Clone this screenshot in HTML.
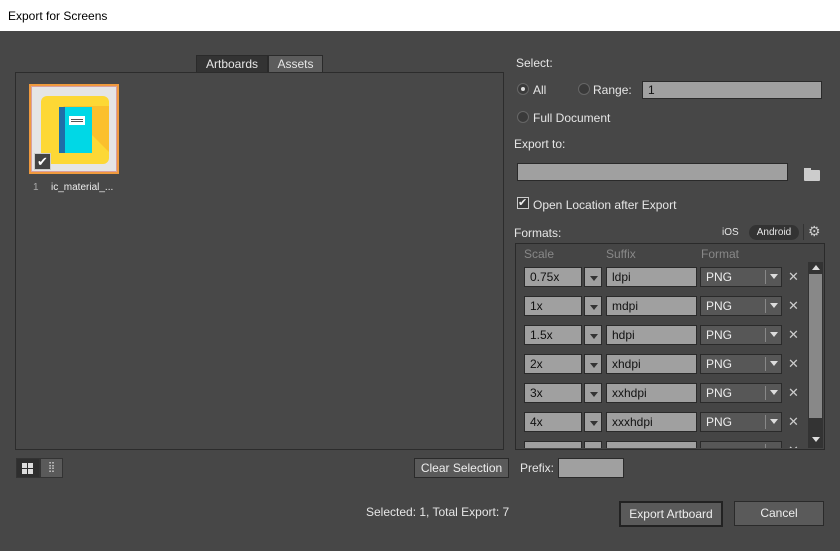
<!DOCTYPE html><html><head><style>
*{box-sizing:border-box;margin:0;padding:0}
body{width:840px;height:551px;background:#474747;font-family:"Liberation Sans",sans-serif;font-size:12px;color:#e6e6e6;position:relative;overflow:hidden}
.a{position:absolute}
.in{position:absolute;background:#a0a0a0;border:1px solid #2a2a2a;color:#111;padding-left:5px;line-height:18px;font-size:12px}
.dd{position:absolute;background:#a0a0a0;border:1px solid #2a2a2a}
.dd:after{content:"";position:absolute;left:5px;top:8px;border-left:4px solid transparent;border-right:4px solid transparent;border-top:5px solid #333}
.fm{position:absolute;background:#575757;border:1px solid #2a2a2a;color:#eee;padding-left:5px;line-height:18px}
.fm i{position:absolute;right:0;top:2px;width:16px;height:14px;border-left:1px solid #888}
.fm i:after{content:"";position:absolute;left:4px;top:4px;border-left:4px solid transparent;border-right:4px solid transparent;border-top:5px solid #ddd}
.x{position:absolute;color:#ccc;font-size:13px}
.rad{position:absolute;width:12px;height:12px;border-radius:50%;background:#3a3a3a;border:1px solid #666}
.btn{position:absolute;background:#5a5a5a;border:1px solid #2a2a2a;color:#eee;text-align:center}
</style></head><body>
<div class="a" style="left:0;top:0;width:840px;height:31px;background:#fff;color:#000;padding:9px 0 0 8px">Export for Screens</div>
<div class="a" style="left:196px;top:55px;width:72px;height:18px;background:#333;border:1px solid #2a2a2a;text-align:center;line-height:16px">Artboards</div>
<div class="a" style="left:268px;top:55px;width:55px;height:18px;background:#5c5c5c;border:1px solid #2a2a2a;text-align:center;line-height:16px">Assets</div>
<div class="a" style="left:15px;top:72px;width:489px;height:378px;background:#484848;border:1px solid #2c2c2c"></div>
<div class="a" style="left:29px;top:84px;width:90px;height:90px;background:#f09a3e;padding:2px"><div style="width:86px;height:86px;background:#e5e5e5;border:1px solid #d7a0a0;position:relative">
<div class="a" style="left:9px;top:9px;width:68px;height:68px;background:#fdd835;border-radius:6px;overflow:hidden">
<div class="a" style="left:22px;top:10px;width:60px;height:70px;background:#fbc02d;transform:skewX(45deg);transform-origin:top left"></div>
<div class="a" style="left:18px;top:11px;width:33px;height:46px;background:#00d8e6"></div>
<div class="a" style="left:18px;top:11px;width:6px;height:46px;background:#1f6ea8"></div>
<div class="a" style="left:28px;top:20px;width:16px;height:9px;background:#fff"></div>
<div class="a" style="left:30px;top:23px;width:12px;height:1px;background:#555"></div>
<div class="a" style="left:30px;top:25px;width:12px;height:1px;background:#555"></div></div>
<div class="a" style="left:2px;top:66px;width:17px;height:17px;background:#444;border:1px solid #ccc;color:#fff;font-size:13px;text-align:center;line-height:15px">✔</div></div></div>
<div class="a" style="left:33px;top:182px;font-size:10px;color:#aaa">1</div>
<div class="a" style="left:51px;top:182px;font-size:10px;color:#eee">ic_material_...</div>
<div class="a" style="left:16px;top:458px;width:24px;height:20px;background:#2e2e2e;border:1px solid #333"></div>
<div class="a" style="left:22px;top:463px;width:5px;height:5px;background:#ddd"></div><div class="a" style="left:28px;top:463px;width:5px;height:5px;background:#ddd"></div>
<div class="a" style="left:22px;top:469px;width:5px;height:5px;background:#ddd"></div><div class="a" style="left:28px;top:469px;width:5px;height:5px;background:#ddd"></div>
<div class="a" style="left:40px;top:458px;width:23px;height:20px;background:#5a5a5a;border:1px solid #333;color:#ccc;font-size:10px;text-align:center;line-height:18px">⣿</div>
<div class="btn" style="left:414px;top:458px;width:95px;height:20px;line-height:18px">Clear Selection</div>
<div class="a" style="left:520px;top:461px">Prefix:</div>
<div class="in" style="left:558px;top:458px;width:66px;height:20px"></div>
<div class="a" style="left:366px;top:505px">Selected: 1, Total Export: 7</div>
<div class="btn" style="left:619px;top:501px;width:104px;height:26px;line-height:22px;border:2px solid #222">Export Artboard</div>
<div class="btn" style="left:734px;top:501px;width:90px;height:25px;line-height:23px">Cancel</div>
<div class="a" style="left:516px;top:56px">Select:</div>
<div class="rad" style="left:517px;top:83px"><div style="width:4px;height:4px;background:#ddd;border-radius:50%;margin:3px"></div></div>
<div class="a" style="left:533px;top:83px">All</div>
<div class="rad" style="left:578px;top:83px"></div>
<div class="a" style="left:593px;top:83px">Range:</div>
<div class="in" style="left:642px;top:81px;width:180px;height:18px;line-height:16px">1</div>
<div class="rad" style="left:517px;top:111px"></div>
<div class="a" style="left:533px;top:111px">Full Document</div>
<div class="a" style="left:514px;top:137px">Export to:</div>
<div class="in" style="left:517px;top:163px;width:271px;height:18px"></div>
<div class="a" style="left:804px;top:170px;width:16px;height:11px;background:#ccc;border-radius:1px"></div>
<div class="a" style="left:804px;top:168px;width:7px;height:3px;background:#ccc"></div>
<div class="a" style="left:517px;top:197px;width:12px;height:12px;border:1px solid #ccc;background:#3a3a3a;color:#eee;font-size:11px;line-height:10px">✔</div>
<div class="a" style="left:533px;top:198px">Open Location after Export</div>
<div class="a" style="left:514px;top:226px">Formats:</div>
<div class="a" style="left:722px;top:227px;font-size:10px">iOS</div>
<div class="a" style="left:749px;top:225px;width:50px;height:15px;background:#333;border-radius:8px;font-size:10px;text-align:center;line-height:15px">Android</div>
<div class="a" style="left:803px;top:224px;width:1px;height:16px;background:#333"></div>
<div class="a" style="left:808px;top:223px;font-size:14px;color:#ccc">⚙</div>
<div class="a" style="left:515px;top:243px;width:310px;height:207px;border:1px solid #2a2a2a;background:#454545;overflow:hidden">
<div class="a" style="left:8px;top:3px;color:#888">Scale</div>
<div class="a" style="left:90px;top:3px;color:#888">Suffix</div>
<div class="a" style="left:185px;top:3px;color:#888">Format</div>
<div class="a" style="left:292px;top:18px;width:15px;height:186px;background:#333"><div style="margin:12px 1px 0;height:144px;background:#888"></div></div>
<div class="a" style="left:296px;top:21px;border-left:4px solid transparent;border-right:4px solid transparent;border-bottom:5px solid #ddd"></div>
<div class="a" style="left:296px;top:193px;border-left:4px solid transparent;border-right:4px solid transparent;border-top:5px solid #ddd"></div>
</div>
<div class="a" style="left:516px;top:244px;width:291px;height:204px;overflow:hidden"><div id="rows" class="a" style="left:-516px;top:-244px;width:840px;height:551px"></div></div>
<script>
var d=[["0.75x","ldpi"],["1x","mdpi"],["1.5x","hdpi"],["2x","xhdpi"],["3x","xxhdpi"],["4x","xxxhdpi"],["",""]],h="";
d.forEach(function(r,i){var y=267+i*29;
h+='<div class="in" style="left:524px;top:'+y+'px;width:58px;height:20px">'+r[0]+'</div><div class="dd" style="left:584px;top:'+y+'px;width:18px;height:20px"></div><div class="in" style="left:606px;top:'+y+'px;width:91px;height:20px">'+r[1]+'</div><div class="fm" style="left:700px;top:'+y+'px;width:82px;height:20px">'+(i<6?'PNG':'')+'<i></i></div><div class="x" style="left:788px;top:'+(y+2)+'px">✕</div>';});
document.getElementById('rows').innerHTML=h;
</script>
</body></html>
